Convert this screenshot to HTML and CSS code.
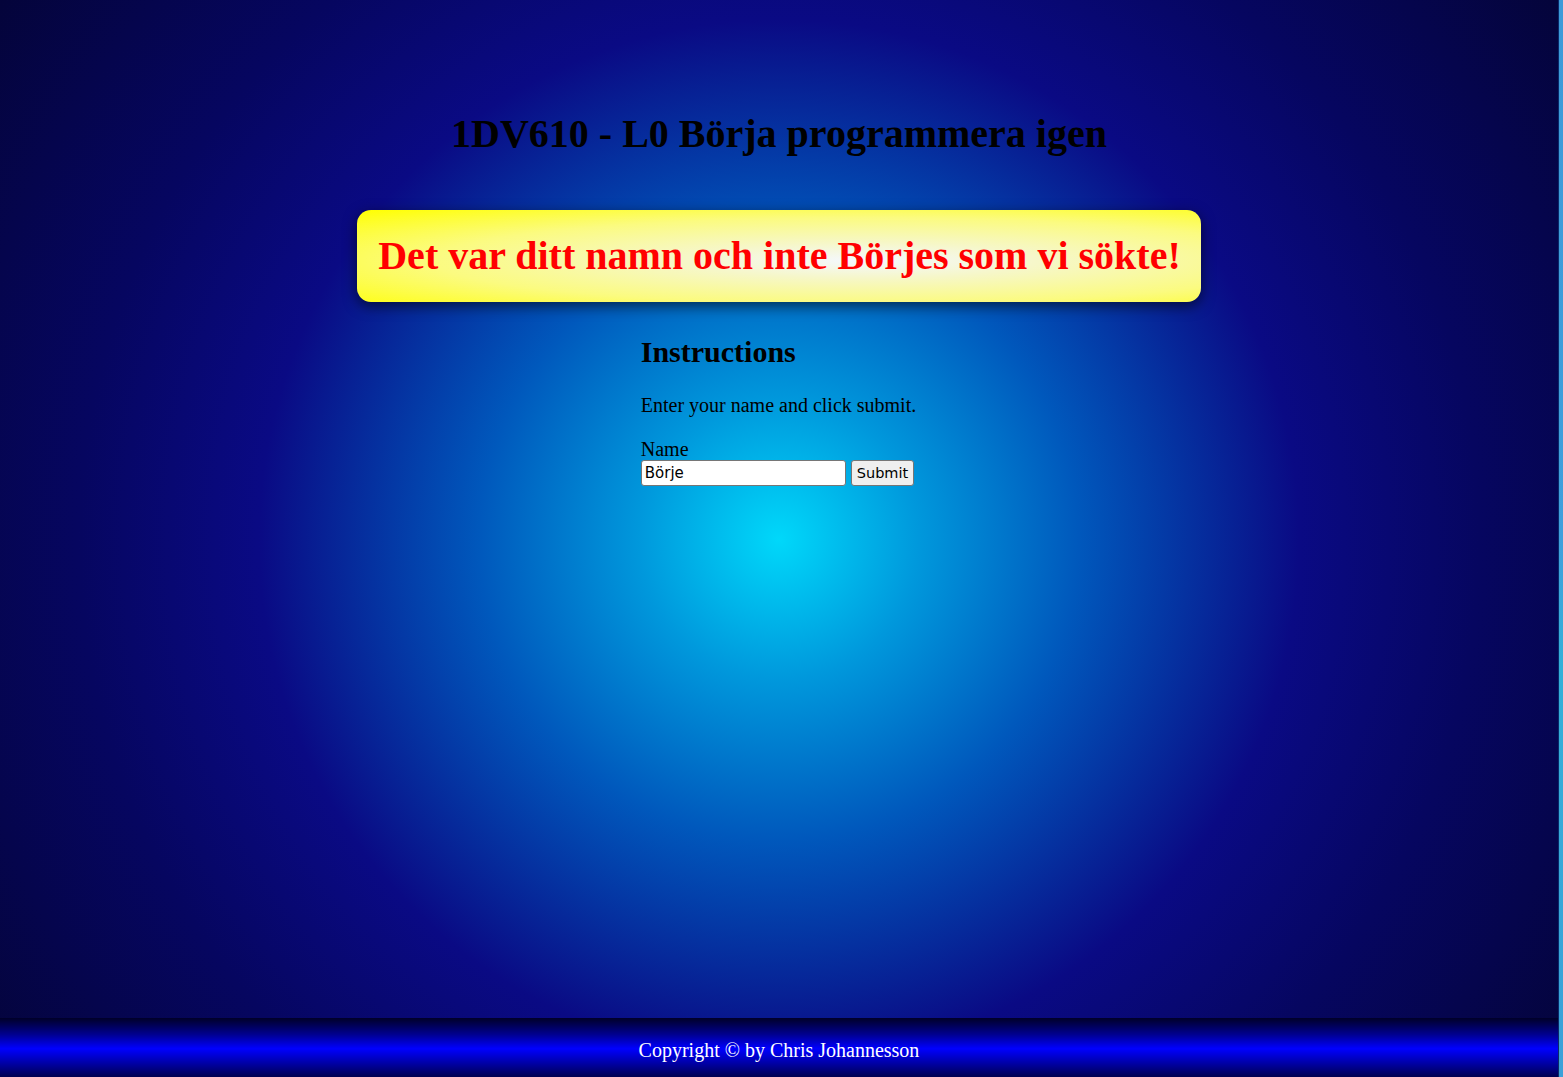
FILE: index.html
```html
<!DOCTYPE html>
<html lang="sv">
<head>
<meta charset="utf-8">
<title>1DV610 - L0 Börja programmera igen</title>
<link rel="stylesheet" href="styles.css">
</head>
<body>
<div class="page">
  <main class="main">
    <h1 class="title">1DV610 - L0 Börja programmera igen</h1>
    <div class="banner-row">
      <div class="banner">Det var ditt namn och inte Börjes som vi sökte!</div>
    </div>
    <div class="content-row">
      <div class="content">
        <h2 class="subtitle">Instructions</h2>
        <p class="text">Enter your name and click submit.</p>
        <form class="form">
          <label class="label" for="name">Name</label>
          <div class="field-row">
            <input class="input" id="name" type="text" value="Börje">
            <button class="button" type="button">Submit</button>
          </div>
        </form>
      </div>
    </div>
  </main>
  <footer class="footer">Copyright © by Chris Johannesson</footer>
</div>
<div class="edge"></div>
</body>
</html>
```

FILE: styles.css
```css
html, body {
  margin: 0;
  padding: 0;
  height: 100%;
}
body {
  display: flex;
  font-family: "Liberation Serif", "Times New Roman", serif;
  color: #000;
  background: #04043c;
  overflow: hidden;
}
.page {
  flex: 1;
  display: flex;
  flex-direction: column;
  height: 1077px;
}
.main {
  flex: 1;
  display: flex;
  flex-direction: column;
  background: radial-gradient(circle at 50% 53%, #00d8fa 0px, #0098dc 140px, #0058bc 300px, #0a0a84 520px, #060660 700px, #04043a 950px);
  padding-top: 110px;
}
.title {
  margin: 0;
  text-align: center;
  font-size: 40px;
  font-weight: bold;
  line-height: 48px;
}
.banner-row {
  display: flex;
  justify-content: center;
  margin-top: 52px;
}
.banner {
  padding: 20px 20px 20px 21px;
  line-height: 52px;
  font-size: 40px;
  font-weight: bold;
  color: #ff0000;
  border-radius: 14px;
  background: radial-gradient(ellipse at 60% 55%, #f4f8ff 0%, #f6f7c8 25%, #fbfb80 60%, #ffff00 100%);
  box-shadow: 0 4px 14px rgba(0, 0, 0, 0.6);
}
.content-row {
  display: flex;
  justify-content: center;
  margin-top: 30px;
}
.content {
  margin-left: -1px;
}
.subtitle {
  margin: 0;
  font-size: 30px;
  line-height: 40px;
  font-weight: bold;
}
.text {
  margin: 21px 0 0;
  font-size: 20px;
  line-height: 24px;
}
.form {
  margin-top: 21px;
}
.label {
  display: block;
  font-size: 20px;
  line-height: 22px;
}
.field-row {
  display: flex;
  gap: 5px;
  align-items: center;
}
.input {
  width: 205px;
  height: 26px;
  box-sizing: border-box;
  margin: 0;
  padding: 1px 3px;
  border: 1px solid #767676;
  border-radius: 3px;
  background: #fff;
  font-family: "DejaVu Sans", Verdana, sans-serif;
  font-size: 15px;
  color: #000;
}
.button {
  height: 26px;
  box-sizing: border-box;
  margin: 0;
  padding: 1px 5px;
  border: 1px solid #767676;
  border-radius: 3px;
  background: #efefef;
  font-family: "DejaVu Sans", Verdana, sans-serif;
  font-size: 14.5px;
  color: #000;
}
.footer {
  height: 59px;
  box-sizing: border-box;
  padding-top: 6px;
  display: flex;
  align-items: center;
  justify-content: center;
  color: #fff;
  font-size: 20px;
  background: linear-gradient(to bottom, #000028 0%, #000090 28%, #0000ff 52%, #0000a8 76%, #000050 100%);
}
.edge {
  width: 4px;
  flex: none;
  border-left: 1px solid #0a2a6a;
  background: linear-gradient(to bottom, #3c9ad8 0%, #3f9fdc 50%, #33b0d8 62%, #3aa0d8 100%);
}
```
